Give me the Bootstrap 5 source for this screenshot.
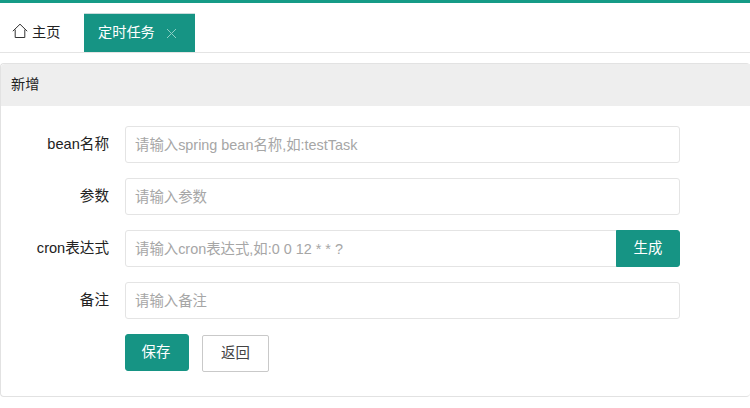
<!DOCTYPE html>
<html lang="zh-CN">
  <head>
    <meta charset="UTF-8" />
    <title>定时任务</title>
    <link href="https://cdn.jsdelivr.net/npm/bootstrap@5.3.0/dist/css/bootstrap.min.css" rel="stylesheet" />
    <style>
      body {
        font-family: "Liberation Sans", "Noto Sans CJK SC", sans-serif;
        font-size: 14.2px;
        color: #333;
        background: #fff;
        overflow: hidden;
      }
      .top-line {
        height: 3px;
        background: #169b87;
      }
      .tab-bar {
        height: 50px;
        padding-top: 10px;
        border-bottom: 1px solid #e4e4e4;
      }
      .tab-home {
        width: 84px;
        padding-left: 12px;
        color: #222;
      }
      .tab-home svg {
        margin-bottom: 3px;
      }
      .tab-home span {
        margin-left: 4px;
      }
      .tab-active {
        width: 111px;
        padding-left: 14px;
        background: #169484;
        color: #fff;
        border-top: 1px solid #c9dcdc;
      }
      .tab-active svg {
        margin-left: 11px;
      }
      .form-panel {
        margin-top: 10px;
        height: 334px;
        border: 1px solid #e2e2e2;
        border-radius: 4px;
        border-right: 0;
      }
      .panel-head {
        height: 42px;
        padding-left: 10px;
        background: #eeeeee;
        color: #222;
        border-radius: 4px 0 0 0;
      }
      .panel-body {
        padding-top: 20px;
      }
      .form-line {
        margin-bottom: 15px;
        height: 37px;
      }
      .form-name {
        width: 108px;
        margin-right: 16px;
        text-align: right;
        color: #222;
        font-size: 14.6px;
      }
      .field-box {
        width: 555px;
      }
      .field-box .form-control {
        height: 37px;
        font-size: 14.4px;
        padding: 0 10px 0 9px;
        border: 1px solid #e4e4e4;
        border-radius: 3px;
      }
      .field-box .form-control::placeholder {
        color: #a6a6a6;
      }
      .btn-teal {
        background: #169484;
        border: 1px solid #169484;
        color: #fff;
        font-size: 14.4px;
        border-radius: 3px;
      }
      .btn-gen {
        width: 64px;
        height: 37px;
        padding: 0;
      }
      .btn-save {
        width: 64px;
        height: 37px;
        padding: 0 2px 0 0;
      }
      .btn-back {
        width: 67px;
        height: 37px;
        padding: 0;
        margin-left: 13px;
        margin-top: 1px;
        font-size: 14.4px;
        color: #444;
        background: #fff;
        border: 1px solid #c9c9c9;
        border-radius: 2px;
      }
    </style>
  </head>
  <body>
    <div class="top-line"></div>
    <div class="tab-bar d-flex">
      <div class="tab-home d-flex align-items-center">
        <svg width="16" height="16" viewBox="0 0 16 16" fill="none" stroke="#333" stroke-width="1">
          <path d="M0.8 8.2 8 1.2l7.2 7M3.2 6.6v7.9h9.6V6.6" />
        </svg>
        <span>主页</span>
      </div>
      <div class="tab-active d-flex align-items-center">
        定时任务
        <svg width="11" height="11" viewBox="0 0 11 11" stroke="#8fcfc5" stroke-width="1">
          <path d="M1 1l9 9M10 1l-9 9" />
        </svg>
      </div>
    </div>

    <div class="form-panel">
      <div class="panel-head d-flex align-items-center">新增</div>
      <div class="panel-body">
        <div class="form-line d-flex align-items-center">
          <label class="form-name">bean名称</label>
          <div class="field-box">
            <input class="form-control" type="text" placeholder="请输入spring bean名称,如:testTask" />
          </div>
        </div>
        <div class="form-line d-flex align-items-center">
          <label class="form-name">参数</label>
          <div class="field-box">
            <input class="form-control" type="text" placeholder="请输入参数" />
          </div>
        </div>
        <div class="form-line d-flex align-items-center">
          <label class="form-name">cron表达式</label>
          <div class="field-box input-group">
            <input class="form-control" type="text" placeholder="请输入cron表达式,如:0 0 12 * * ?" />
            <button class="btn btn-teal btn-gen" type="button">生成</button>
          </div>
        </div>
        <div class="form-line d-flex align-items-center">
          <label class="form-name">备注</label>
          <div class="field-box">
            <input class="form-control" type="text" placeholder="请输入备注" />
          </div>
        </div>
        <div class="d-flex align-items-start">
          <div class="form-name"></div>
          <button class="btn btn-teal btn-save" type="button">保存</button>
          <button class="btn btn-back" type="button">返回</button>
        </div>
      </div>
    </div>

    <script src="https://cdn.jsdelivr.net/npm/bootstrap@5.3.0/dist/js/bootstrap.bundle.min.js"></script>
  </body>
</html>
